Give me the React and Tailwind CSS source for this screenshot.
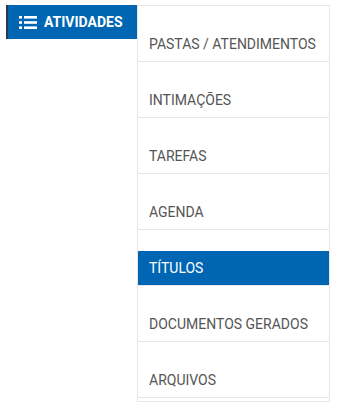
import React from 'react';

const items = [
    { label: 'PASTAS / ATENDIMENTOS' },
    { label: 'INTIMAÇÕES' },
    { label: 'TAREFAS' },
    { label: 'AGENDA' },
    { label: 'TÍTULOS', active: true },
    { label: 'DOCUMENTOS GERADOS' },
    { label: 'ARQUIVOS' },
];

const ListIcon = () => (
    <svg width="18" height="13" viewBox="0 0 18 13" fill="white">
        <rect x="0" y="0" width="3" height="2.6" />
        <rect x="5" y="0" width="13" height="2.6" />
        <rect x="0" y="5.2" width="3" height="2.6" />
        <rect x="5" y="5.2" width="13" height="2.6" />
        <rect x="0" y="10.4" width="3" height="2.6" />
        <rect x="5" y="10.4" width="13" height="2.6" />
    </svg>
);

export default function App() {
    return (
        <div className="min-h-[412px] bg-white pt-[5px] pl-[6px] flex items-start" style={{ fontFamily: 'Roboto, "Liberation Sans", sans-serif' }}>
            {/* Menu button */}
            <button className="w-[131px] h-[34px] bg-[#0066b3] border-l-2 border-[#2b3a48] flex items-center gap-[7px] pl-[11px] text-white font-bold text-[14px]">
                <ListIcon />
                ATIVIDADES
            </button>

            {/* Dropdown panel */}
            <ul className="w-[193px] border border-[#e6e6e6] pb-[3px]">
                {items.map(item => (
                    <li key={item.label} className="h-[56px] border-b border-[#e6e6e6] pt-[21px]">
                        <a className={`h-[34px] flex items-center px-[11px] text-[14px] ${item.active ? 'bg-[#0066b3] text-white' : 'text-[#555555]'}`}>
                            {item.label}
                        </a>
                    </li>
                ))}
            </ul>
        </div>
    );
}
